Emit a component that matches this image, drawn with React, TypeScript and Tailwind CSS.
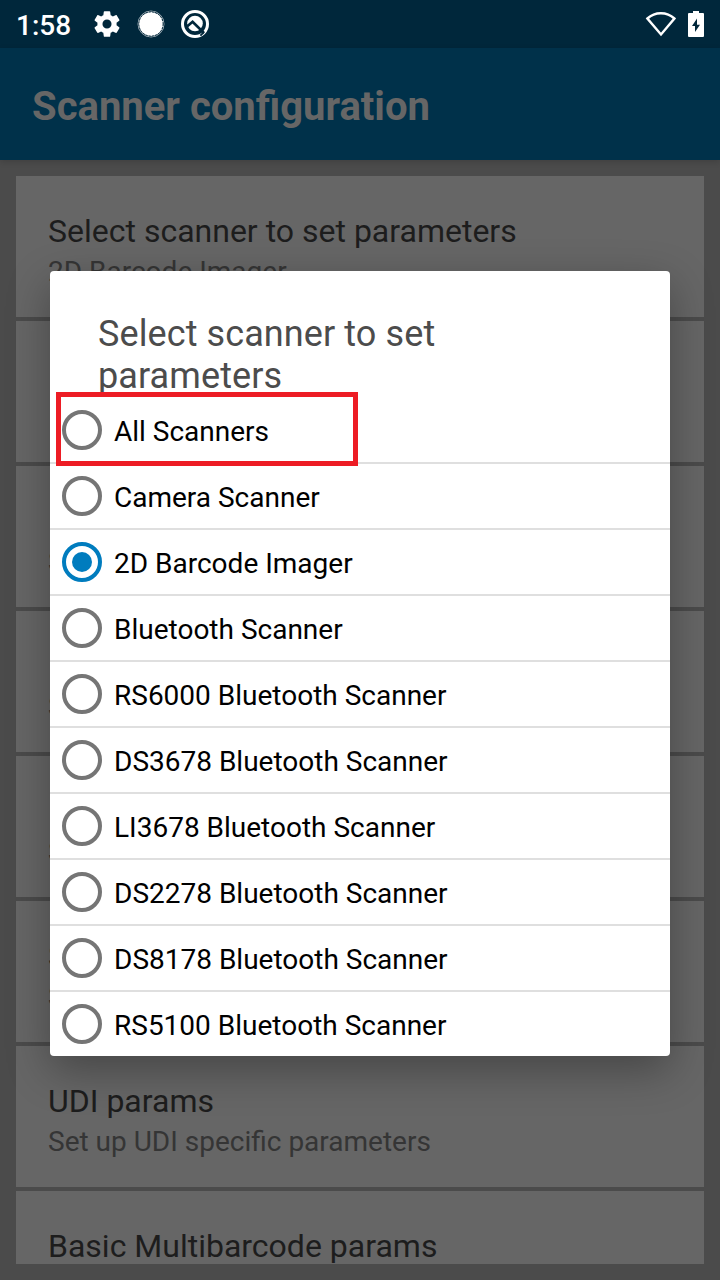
const cards = [
  { title: 'Select scanner to set parameters', note: '2D Barcode Imager' },
  { title: '', note: '' },
  { title: '', note: 'S' },
  { title: '', note: 'S' },
  { title: '', note: 'S' },
  { title: 'S', note: 'S' },
  { title: 'UDI params', note: 'Set up UDI specific parameters' },
  { title: 'Basic Multibarcode params', note: '' },
];

const scanners = [
  'All Scanners',
  'Camera Scanner',
  '2D Barcode Imager',
  'Bluetooth Scanner',
  'RS6000 Bluetooth Scanner',
  'DS3678 Bluetooth Scanner',
  'LI3678 Bluetooth Scanner',
  'DS2278 Bluetooth Scanner',
  'DS8178 Bluetooth Scanner',
  'RS5100 Bluetooth Scanner',
];

const selected = '2D Barcode Imager';

function StatusBar() {
  return (
    <div className="flex h-12 shrink-0 items-center bg-[#00273b] text-white">
      <span className="ml-4 w-[75px] pt-1 text-[28px] leading-8 font-medium">1:58</span>
      <svg className="h-8 w-8" viewBox="0 0 24 24" fill="currentColor">
        <path d="M19.14 12.94c.04-.3.06-.61.06-.94 0-.32-.02-.64-.07-.94l2.03-1.58c.18-.14.23-.41.12-.61l-1.92-3.32c-.12-.22-.37-.29-.59-.22l-2.39.96c-.5-.38-1.03-.7-1.62-.94l-.36-2.54c-.04-.24-.24-.41-.48-.41h-3.84c-.24 0-.43.17-.47.41l-.36 2.54c-.59.24-1.13.57-1.62.94l-2.39-.96c-.22-.08-.47 0-.59.22L2.74 8.87c-.12.21-.08.47.12.61l2.03 1.58c-.05.3-.09.63-.09.94s.02.64.07.94l-2.03 1.58c-.18.14-.23.41-.12.61l1.92 3.32c.12.22.37.29.59.22l2.39-.96c.5.38 1.03.7 1.62.94l.36 2.54c.05.24.24.41.48.41h3.84c.24 0 .44-.17.47-.41l.36-2.54c.59-.24 1.13-.56 1.62-.94l2.39.96c.22.08.47 0 .59-.22l1.92-3.32c.12-.22.07-.47-.12-.61l-2.01-1.58zM12 15.4A3.4 3.4 0 1 1 12 8.6a3.4 3.4 0 0 1 0 6.8z" />
      </svg>
      <svg className="ml-3 h-8 w-8" viewBox="0 0 32 32">
        <circle cx="16" cy="16" r="13" fill="none" stroke="#9eacb4" strokeWidth="1" />
        <circle cx="16" cy="16" r="12.1" fill="#fff" />
        <circle cx="16" cy="16" r="12.1" fill="none" stroke="#00273b" strokeWidth="0.9" strokeDasharray="2 1.2" />
      </svg>
      <svg className="ml-3 h-8 w-8" viewBox="0 0 32 32" fill="none">
        <circle cx="16" cy="16" r="12.5" stroke="#fff" strokeWidth="3" />
        <circle cx="16" cy="15.5" r="7.8" fill="#fff" />
        <path d="M8 18.6L13.6 13.8L25 25" stroke="#00273b" strokeWidth="2.6" />
        <path d="M21.4 27.6L25 24" stroke="#00273b" strokeWidth="1.8" />
      </svg>
      <div className="flex-1" />
      <svg className="h-8 w-8" viewBox="0 0 32 32" fill="none">
        <path d="M2.4 10.3C10 3.3 21.8 3.3 29.4 10.3L16 26.3Z" stroke="#fff" strokeWidth="2.4" transform="translate(0 .2)" />
      </svg>
      <svg className="mr-2 ml-[3px] h-8 w-8" viewBox="0 0 32 32">
        <path d="M13 3h6v2h4q1 0 1 1v22q0 1-1 1H9q-1 0-1-1V6q0-1 1-1h4z" fill="#fff" />
        <path d="M17 10.5v6.2h3L15 24v-6h-3z" fill="#00273b" />
      </svg>
    </div>
  );
}

function Radio({ checked }: { checked: boolean }) {
  return (
    <span
      className={
        checked
          ? 'flex h-10 w-10 items-center justify-center rounded-full border-4 border-[#007cbe]'
          : 'flex h-10 w-10 rounded-full border-4 border-[#757575]'
      }
    >
      {checked && <span className="h-5 w-5 rounded-full bg-[#007cbe]" />}
    </span>
  );
}

function ScannerDialog() {
  return (
    <div className="absolute top-[271px] left-[50px] h-[785px] w-[620px] rounded-[4px] bg-white shadow-[0_14px_44px_rgba(0,0,0,0.32)]">
      <h2 className="h-[127px] pt-[42px] pr-24 pl-12 text-[36px] leading-[42px] tracking-[0.1px] text-[#4c4c4c]">
        Select scanner to set
        <br />
        parameters
      </h2>
      <ul>
        {scanners.map((name) => (
          <li key={name} className="flex h-[66px] items-center border-b-2 border-[#dfdfdf] pl-3 last:border-transparent">
            <Radio checked={name === selected} />
            <span className="ml-3 pt-1 text-[28px] leading-8 text-black">{name}</span>
          </li>
        ))}
      </ul>
      <div className="absolute top-[121px] left-[6px] h-[74px] w-[302px] border-[5px] border-[#ed1c24]" />
    </div>
  );
}

export default function App() {
  return (
    <div className="relative flex h-[1280px] w-[720px] flex-col overflow-hidden bg-[#4b4b4b] font-['Roboto',sans-serif]">
      <StatusBar />
      <header className="relative flex h-28 shrink-0 items-center bg-[#00314a] pl-8 shadow-[0_2px_6px_rgba(0,0,0,0.15)]">
        <h1 className="pt-1.5 text-[40px] leading-[48px] font-bold text-[#666]">Scanner configuration</h1>
      </header>
      <main className="m-4 flex h-[1088px] flex-col gap-1 overflow-hidden">
        {cards.map((card, i) => (
          <section key={i} className="h-[141px] shrink-0 bg-[#666] pt-9 pl-8">
            <p className="h-[38px] text-[32px] leading-[38px] text-[#1d1d1d]">{card.title}</p>
            <p className="h-[34px] pt-[5px] text-[28px] leading-[34px] text-[#353535]">{card.note}</p>
          </section>
        ))}
      </main>
      <ScannerDialog />
    </div>
  );
}
